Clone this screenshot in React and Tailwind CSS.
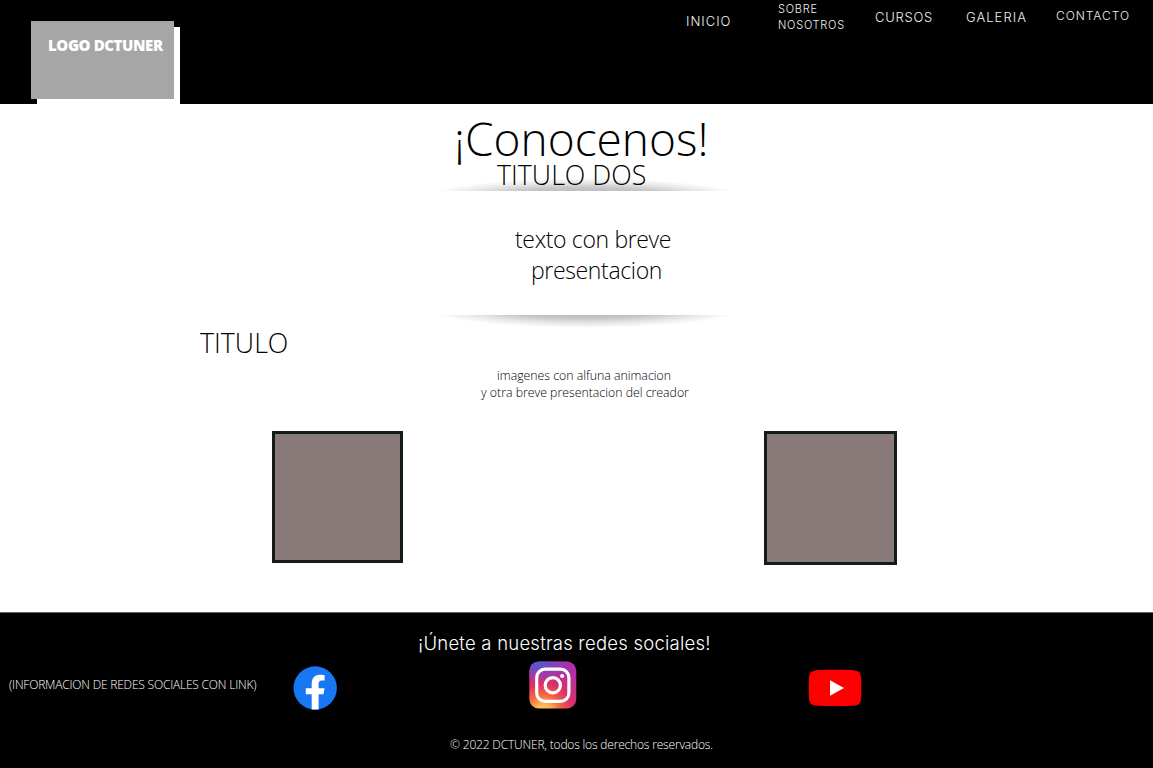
function SoftShadow({ flip = false }) {
  return (
    <svg
      className={flip ? "block h-[14px] w-[300px] -scale-y-100" : "block h-[14px] w-[300px]"}
      viewBox="0 0 300 14"
      aria-hidden="true"
    >
      <defs>
        <radialGradient
          id={flip ? "shade-up" : "shade-down"}
          gradientUnits="userSpaceOnUse"
          cx="0"
          cy="0"
          r="1"
          gradientTransform="translate(150 -12) scale(173 25)"
        >
          <stop offset="0.46" stopColor="#000" stopOpacity="0.26" />
          <stop offset="0.62" stopColor="#000" stopOpacity="0.22" />
          <stop offset="0.8" stopColor="#000" stopOpacity="0.1" />
          <stop offset="1" stopColor="#000" stopOpacity="0" />
        </radialGradient>
      </defs>
      <rect width="300" height="14" fill={flip ? "url(#shade-up)" : "url(#shade-down)"} />
    </svg>
  );
}

function FacebookIcon() {
  return (
    <svg className="block size-[44px]" viewBox="0 0 44 44" aria-label="Facebook">
      <circle cx="22.2" cy="22" r="21.7" fill="#1877f2" />
      <path
        d="M18.700 43.600V28.200h-5.900v-5.900h5.900v-4.600c0-5.800 3.300-8.900 8.500-8.900 2 0 4.400.3 4.400.3v5.300h-2.600c-2.800 0-3.400 1.700-3.400 3.400v4.500h5.900l-1 5.900h-4.900v15.400Z"
        fill="#fff"
      />
    </svg>
  );
}

function InstagramIcon() {
  return (
    <svg className="block size-[48px]" viewBox="0 0 48 48" aria-label="Instagram">
      <defs>
        <radialGradient id="ig-warm" gradientUnits="userSpaceOnUse" cx="14" cy="52" r="48">
          <stop offset="0" stopColor="#fed576" />
          <stop offset="0.18" stopColor="#fdb457" />
          <stop offset="0.38" stopColor="#f4663f" />
          <stop offset="0.62" stopColor="#dc3067" />
          <stop offset="1" stopColor="#b52fa5" />
        </radialGradient>
        <radialGradient
          id="ig-cool"
          gradientUnits="userSpaceOnUse"
          cx="0"
          cy="0"
          r="1"
          gradientTransform="translate(3 -1) rotate(10) scale(44 22)"
        >
          <stop offset="0" stopColor="#4a5fd3" />
          <stop offset="0.3" stopColor="#5a55cc" stopOpacity="0.9" />
          <stop offset="1" stopColor="#8a3ac8" stopOpacity="0" />
        </radialGradient>
      </defs>
      <rect x="0.3" y="0.5" width="47" height="47" rx="9.5" fill="url(#ig-warm)" />
      <rect x="0.3" y="0.5" width="47" height="47" rx="9.5" fill="url(#ig-cool)" />
      <rect x="7.7" y="8.2" width="32.2" height="32.2" rx="8.5" fill="none" stroke="#fff" strokeWidth="3.2" />
      <circle cx="23.8" cy="24.3" r="7.6" fill="none" stroke="#fff" strokeWidth="3.2" />
      <circle cx="33.2" cy="15" r="2.1" fill="#fff" />
    </svg>
  );
}

function YoutubeIcon() {
  return (
    <svg className="block h-[38px] w-[54px]" viewBox="0 0 54 38" aria-label="YouTube">
      <path
        d="M7 1.4C13 .6 41 .6 47 1.4c3.600.5 5.400 2.500 5.800 5.600.7 6 .7 18 0 24-.4 3.100-2.200 5.100-5.800 5.600-6 .8-34 .8-40 0C3.400 36.100 1.600 34.100 1.200 31 .5 25 .5 13 1.200 7 1.600 3.900 3.400 1.900 7 1.400Z"
        fill="#f00"
      />
      <path d="M22 11.200v15.600L36 19Z" fill="#fff" />
    </svg>
  );
}

export default function App() {
  return (
    <div className="flex h-[768px] w-[1153px] flex-col overflow-hidden bg-white font-['Open_Sans',sans-serif] font-light text-black">
      <header className="flex h-[104px] shrink-0 items-start justify-between bg-black">
        <div className="ml-[31px] mt-[21px] h-[78px] w-[143px] bg-[#a6a6a6] pl-[17px] pt-[14px] shadow-[6px_6px_0_0_#fff]">
          <span className="block whitespace-nowrap text-[15px] leading-5 font-extrabold tracking-[-0.4px] text-white">
            LOGO DCTUNER
          </span>
        </div>
        <nav className="flex w-[467px] items-start whitespace-nowrap font-['Inter',sans-serif] font-light text-[#f0f0f0]">
          <a className="mt-[11px] w-[92px] text-[13px] leading-5 tracking-[1px]">INICIO</a>
          <a className="mt-[2px] w-[97px] text-[11px] leading-[15.500px] tracking-[0.75px]">
            SOBRE
            <br />
            NOSOTROS
          </a>
          <a className="mt-[7px] w-[91px] text-[13px] leading-5 tracking-[0.75px]">CURSOS</a>
          <a className="mt-[7px] w-[90px] text-[13px] leading-5 tracking-[1.05px]">GALERIA</a>
          <a className="mt-[6px] text-[12px] leading-5 tracking-[0.95px]">CONTACTO</a>
        </nav>
      </header>

      <main className="flex h-[508px] shrink-0 flex-col">
        <section className="relative isolate ml-[435px] flex h-[87px] w-[300px] flex-col whitespace-nowrap pt-[8px]">
          <div className="absolute bottom-0 left-0 -z-10">
            <SoftShadow flip />
          </div>
          <h1 className="ml-[19px] text-[46px] leading-[52px]">¡Conocenos!</h1>
          <h2 className="ml-[62px] mt-px text-[26.800px] leading-[20px]">TITULO DOS</h2>
        </section>

        <section className="ml-[435px] flex h-[138px] w-[300px] flex-col whitespace-nowrap pt-[33px] text-[23px] leading-[31px] tracking-[-0.35px]">
          <p className="ml-[80px] h-[31px]">texto con breve</p>
          <p className="ml-[96px] h-[31px]">presentacion</p>
          <div className="mt-auto h-[14px]">
            <SoftShadow />
          </div>
        </section>

        <h2 className="ml-[200px] mt-[2px] whitespace-nowrap text-[26.800px] leading-[24px]">TITULO</h2>

        <section className="mt-[12px] flex flex-col whitespace-nowrap text-[12.300px] leading-[17px]">
          <p className="ml-[497px]">imagenes con alfuna animacion</p>
          <p className="ml-[481px]">y otra breve presentacion del creador</p>
        </section>

        <section className="ml-[272px] mt-[30px] flex w-[625px] items-start justify-between">
          <div className="h-[132px] w-[131px] border-[3px] border-[#141c18] bg-[#8a7979]" />
          <div className="h-[134px] w-[133px] border-[3px] border-[#141c18] bg-[#8a7979]" />
        </section>
      </main>

      <footer className="flex h-[156px] shrink-0 flex-col whitespace-nowrap border-t border-[#666] bg-black text-white">
        <h3 className="ml-[418px] mt-[18px] font-['Inter',sans-serif] text-[18.500px] leading-6 font-light tracking-[0.23px]">
          ¡Únete a nuestras redes sociales!
        </h3>
        <div className="mt-[6px] flex h-[50px] items-start">
          <p className="ml-[9px] mt-[14px] w-[284px] text-[12px] leading-5 tracking-[-0.2px]">
            (INFORMACION DE REDES SOCIALES CON LINK)
          </p>
          <div className="mt-[5px] w-[236px]">
            <FacebookIcon />
          </div>
          <div className="w-[279px]">
            <InstagramIcon />
          </div>
          <div className="mt-[8px]">
            <YoutubeIcon />
          </div>
        </div>
        <p className="ml-[450px] mt-[24px] text-[12px] leading-5 tracking-[-0.18px]">
          © 2022 DCTUNER, todos los derechos reservados.
        </p>
      </footer>
    </div>
  );
}
